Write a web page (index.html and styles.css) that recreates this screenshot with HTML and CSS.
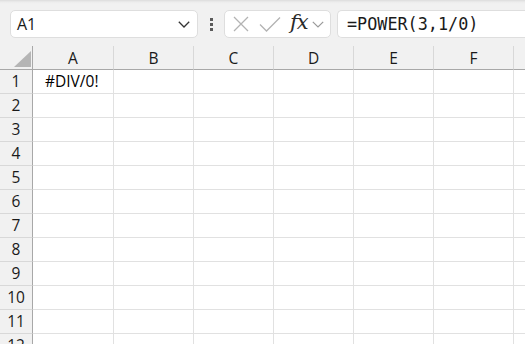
FILE: index.html
```html
<!DOCTYPE html>
<html>
<head>
<meta charset="utf-8">
<link rel="stylesheet" href="styles.css">
</head>
<body>
<div class="toolbar">
  <div class="namebox">
    <span class="ref">A1</span>
    <svg class="chev" width="12" height="7" viewBox="0 0 12 7"><path d="M0.8 0.8 L6 6 L11.2 0.8" fill="none" stroke="#333" stroke-width="1.3"/></svg>
  </div>
  <div class="dots"><i></i><i></i><i></i></div>
  <div class="btns">
    <svg class="ic-x" width="16" height="16" viewBox="0 0 16 16"><path d="M1 1 L15 15 M15 1 L1 15" stroke="#b3b3b3" stroke-width="1.3" fill="none"/></svg>
    <svg class="ic-ok" width="22" height="16" viewBox="0 0 22 16"><path d="M1 8.5 L7.5 15 L21 1.5" stroke="#b3b3b3" stroke-width="1.3" fill="none"/></svg>
    <span class="fx">fx</span>
    <svg class="chev2" width="12" height="7" viewBox="0 0 12 7"><path d="M0.8 0.8 L6 6 L11.2 0.8" fill="none" stroke="#9a9a9a" stroke-width="1.2"/></svg>
  </div>
  <div class="formula">=POWER(3,1/0)</div>
</div>
<div class="sheet">
  <div class="corner"><span class="tri"></span></div>
  <div class="ch cha">A</div><div class="ch">B</div><div class="ch">C</div><div class="ch">D</div><div class="ch">E</div><div class="ch">F</div><div class="ch"></div>
</div>
<div class="rows" id="rows"></div>
<script>
  var rows = document.getElementById('rows');
  for (var r = 1; r <= 12; r++) {
    var row = document.createElement('div');
    row.className = 'row';
    var h = document.createElement('div');
    h.className = 'rh';
    h.textContent = r;
    row.appendChild(h);
    for (var c = 0; c < 7; c++) {
      var cell = document.createElement('div');
      cell.className = 'cell' + (c === 0 ? ' cola' : '');
      if (r === 1 && c === 0) cell.textContent = '#DIV/0!';
      row.appendChild(cell);
    }
    rows.appendChild(row);
  }
</script>
</body>
</html>
```
FILE: styles.css
```css
html, body {
  margin: 0;
  padding: 0;
  width: 525px;
  height: 344px;
  overflow: hidden;
  background: #fff;
  font-family: "Open Sans", "Noto Sans", sans-serif;
  color: #1a1a1a;
}
.toolbar {
  height: 46px;
  box-sizing: border-box;
  background: linear-gradient(#dcdcdc 0px, #ececec 2px, #f1f1f1 4px, #f1f1f1 100%);
  display: flex;
  align-items: flex-start;
  padding-top: 10px;
  padding-left: 10px;
  white-space: nowrap;
  overflow: hidden;
}
.toolbar > * { flex: none; }
.namebox {
  width: 188px;
  height: 28px;
  box-sizing: border-box;
  background: #fff;
  border: 1px solid #dedede;
  border-radius: 5px;
  display: flex;
  align-items: center;
  padding-left: 6px;
  padding-right: 7px;
}
.ref {
  font-size: 16px;
  flex: 1;
  color: #1a1a1a;
}
.dots {
  width: 26px;
  display: flex;
  flex-direction: column;
  align-items: center;
  gap: 2px;
  padding-top: 8px;
}
.dots i {
  width: 3px;
  height: 3px;
  background: #5a5a5a;
  display: block;
}
.btns {
  width: 107px;
  height: 28px;
  box-sizing: border-box;
  background: #fff;
  border: 1px solid #dedede;
  border-radius: 5px;
  display: flex;
  align-items: center;
  padding-left: 8px;
}
.ic-x { margin-right: 10px; }
.ic-ok { margin-right: 9px; }
.fx {
  font-family: "DejaVu Serif", "Liberation Serif", serif;
  font-style: italic;
  font-size: 21px;
  color: #2a2a2a;
  margin-top: -4px;
  margin-right: 4px;
  letter-spacing: -1px;
}
.chev2 { margin-top: 1px; }
.formula {
  margin-left: 6px;
  width: 200px;
  height: 28px;
  box-sizing: border-box;
  background: #fff;
  border: 1px solid #dedede;
  border-right: none;
  border-radius: 5px 0 0 5px;
  font-family: "DejaVu Sans Mono", "Liberation Mono", monospace;
  font-size: 16.8px;
  line-height: 26px;
  padding-left: 9px;
  color: #1a1a1a;
}
.sheet {
  display: flex;
  height: 24px;
  background: #f1f1f1;
}
.corner {
  width: 33px;
  flex: none;
  box-sizing: border-box;
  border-right: 1px solid #a8a8a8;
  border-bottom: 1px solid #a8a8a8;
  position: relative;
}
.tri {
  position: absolute;
  left: 14px;
  top: 5px;
  width: 0;
  height: 0;
  border-left: 17px solid transparent;
  border-bottom: 16px solid #b5b5b5;
}
.ch {
  width: 80px;
  flex: none;
  box-sizing: border-box;
  border-right: 1px solid #d8d8d8;
  border-bottom: 1px solid #a8a8a8;
  font-size: 15.5px;
  line-height: 24px;
  text-align: center;
  color: #1a1a1a;
}
.ch.cha { width: 81px; }
.row {
  display: flex;
  height: 24px;
}
.rh {
  width: 33px;
  flex: none;
  box-sizing: border-box;
  background: #f1f1f1;
  border-right: 1px solid #a8a8a8;
  border-bottom: 1px solid #d8d8d8;
  text-align: center;
  font-size: 15.5px;
  line-height: 23px;
  color: #1a1a1a;
}
.cell {
  width: 80px;
  flex: none;
  box-sizing: border-box;
  border-right: 1px solid #e1e1e1;
  border-bottom: 1px solid #e1e1e1;
  font-size: 15.5px;
  line-height: 23px;
  padding-left: 12px;
  color: #000;
}
.cell.cola { width: 81px; }
```
